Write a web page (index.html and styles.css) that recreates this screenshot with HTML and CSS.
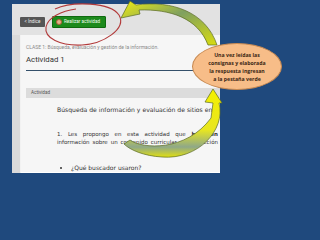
FILE: index.html
```html
<!DOCTYPE html>
<html lang="es">
<head>
<meta charset="utf-8">
<link rel="stylesheet" href="styles.css">
</head>
<body>
<div class="slide">
  <div class="panel">
    <div class="topbar">
      <div class="btn-index">&lt; Índice</div>
      <div class="btn-go"><span class="go-icon"></span>Realizar actividad</div>
    </div>
    <div class="main">
      <div class="strip"></div>
      <div class="card">
        <div class="crumb">CLASE 1: Búsqueda, evaluación y gestión de la información.</div>
        <div class="title">Actividad 1</div>
        <div class="rule"></div>
        <div class="bar">Actividad</div>
        <div class="subtitle">Búsqueda de información y evaluación de sitios en Internet</div>
        <div class="para">
          <div class="jline">1. Les propongo en esta actividad que <b>busquen</b></div>
          <div class="jline">información sobre un contenido curricular a su elección</div>
        </div>
        <ul class="list">
          <li>¿Qué buscador usaron?</li>
        </ul>
      </div>
    </div>
  </div>

  <svg class="overlay" width="320" height="240" viewBox="0 0 320 240">
    <defs>
      <linearGradient id="g1" x1="0" y1="0" x2="1" y2="1">
        <stop offset="0" stop-color="#f2ee10"/>
        <stop offset="0.45" stop-color="#7fa060"/>
        <stop offset="1" stop-color="#d8dc10"/>
      </linearGradient>
      <linearGradient id="g2" x1="0" y1="0" x2="0" y2="1">
        <stop offset="0" stop-color="#f4f000"/>
        <stop offset="0.6" stop-color="#e8e620"/>
        <stop offset="0.85" stop-color="#8fa888"/>
        <stop offset="1" stop-color="#e2e010"/>
      </linearGradient>
    </defs>
    <path d="M55 9 C72 1, 110 2, 119 15 C127 29, 103 44, 82 45 C60 46, 44 38, 46 27 C48 17, 62 11, 76 9" fill="none" stroke="#b23a3a" stroke-width="1.1"/>
    <path d="M121 18 L130 1 L136 5 C172 0, 206 12, 217 45 L208 45 C198 18, 170 9, 139 10 L140 14 Z" fill="url(#g1)" stroke="#5a6a25" stroke-width="0.7"/>
    <path d="M213 89 L222 103 L219 103 C226 130, 198 160, 162 157 C144 156, 130 150, 124 144 L130 140 C142 149, 186 152, 211 118 L213 103 L205 102 Z" fill="url(#g2)" stroke="#5a6a25" stroke-width="0.7"/>
  </svg>

  <div class="callout">Una vez leídas las<br>consignas y elaborada<br>la respuesta ingresan<br>a la pestaña verde</div>
</div>
</body>
</html>
```

FILE: styles.css
```css
* { box-sizing: border-box; }
html, body { margin: 0; padding: 0; }
body {
  width: 320px;
  height: 240px;
  background: #1f497d;
  overflow: hidden;
  font-family: Roboto, "Liberation Sans", sans-serif;
}
.slide {
  position: relative;
  width: 320px;
  height: 240px;
  padding: 4px 0 0 12px;
}
.panel {
  width: 208px;
  height: 169px;
  background: #e3e3e3;
  overflow: hidden;
  display: flex;
  flex-direction: column;
}
.topbar {
  height: 31px;
  flex: none;
  display: flex;
  align-items: flex-start;
  gap: 7px;
  padding: 12px 0 0 8px;
  background: #e2e2e2;
}
.btn-index {
  margin-top: 1px;
  height: 10px;
  width: 25px;
  background: #555;
  color: #f0f0f0;
  font-size: 4.6px;
  line-height: 10px;
  text-align: center;
  border-radius: 1px;
}
.btn-go {
  height: 12px;
  width: 54px;
  background: #1c8a1c;
  border: 1px solid #0f6a0f;
  color: #f4fff4;
  font-size: 4.6px;
  line-height: 10px;
  display: flex;
  align-items: center;
  gap: 2px;
  padding-left: 3px;
  border-radius: 1px;
}
.go-icon {
  width: 6px;
  height: 6px;
  border-radius: 50%;
  background: #e0b48a;
  border: 1px solid #b65a3a;
  flex: none;
}
.main {
  flex: 1;
  display: flex;
}
.strip {
  width: 9px;
  background: #dadada;
  border-right: 1px solid #f2f2f2;
}
.card {
  flex: 1;
  background: #f6f6f6;
  padding: 9px 0 0 5px;
  border-bottom: 1px solid #fff;
  white-space: nowrap;
  overflow: hidden;
}
.crumb {
  font-size: 5px;
  line-height: 6px;
  color: #8a8a8a;
}
.title {
  margin-top: 5px;
  font-size: 7.8px;
  line-height: 10px;
  color: #333;
}
.rule {
  margin-top: 5px;
  height: 1px;
  background: #34506a;
  width: 200px;
}
.bar {
  margin-top: 17px;
  height: 10px;
  width: 200px;
  background: #dcdcdc;
  font-size: 4.6px;
  line-height: 10px;
  color: #555;
  padding-left: 5px;
}
.subtitle {
  margin-top: 8px;
  padding-left: 31px;
  font-family: "DejaVu Sans", Verdana, sans-serif;
  font-size: 6.1px;
  line-height: 8px;
  color: #333;
}
.para {
  margin-top: 16px;
  margin-left: 31px;
  width: 161px;
  font-family: "DejaVu Sans", Verdana, sans-serif;
  font-size: 5.5px;
  line-height: 8px;
  color: #333;
}
.jline {
  white-space: nowrap;
  text-align: justify;
  text-align-last: justify;
}
.list {
  margin: 18px 0 0 0;
  padding-left: 45px;
  font-family: "DejaVu Sans", Verdana, sans-serif;
  font-size: 6px;
  line-height: 8px;
  color: #333;
}
.overlay {
  position: absolute;
  left: 0;
  top: 0;
}
.callout {
  position: absolute;
  left: 192px;
  top: 43px;
  width: 90px;
  height: 47px;
  border-radius: 50%;
  background: #f7bd88;
  border: 1px solid #c88a52;
  color: #3a2614;
  font-family: "Open Sans", "Liberation Sans", sans-serif;
  font-weight: bold;
  font-size: 5.2px;
  line-height: 8px;
  text-align: center;
  padding-top: 7px;
}
```
